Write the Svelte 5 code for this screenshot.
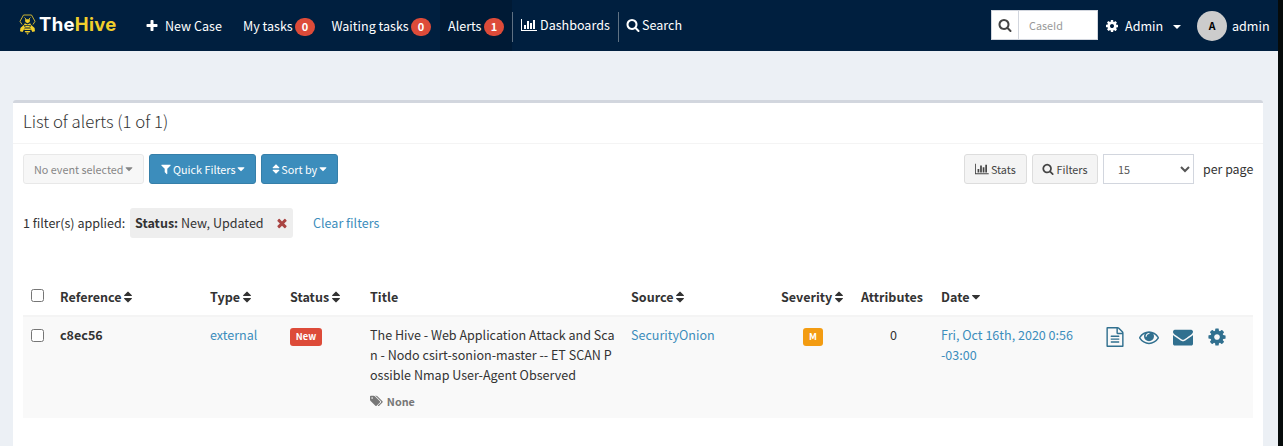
<script>
  const icons = {
    plus: [1792, 'M1600 736v192q0 40-28 68t-68 28h-416v416q0 40-28 68t-68 28h-192q-40 0-68-28t-28-68v-416h-416q-40 0-68-28t-28-68v-192q0-40 28-68t68-28h416v-416q0-40 28-68t68-28h192q40 0 68 28t28 68v416h416q40 0 68 28t28 68z'],
    search: [1792, 'M1216 832q0-185-131.5-316.5t-316.5-131.5-316.5 131.5-131.5 316.5 131.5 316.5 316.5 131.5 316.5-131.5 131.5-316.5zm512 832q0 52-38 90t-90 38q-54 0-90-38l-343-342q-179 124-399 124-143 0-273.5-55.5t-225-150-150-225-55.5-273.5 55.5-273.5 150-225 225-150 273.5-55.5 273.5 55.5 225 150 150 225 55.5 273.5q0 220-124 399l343 343q37 37 37 90z'],
    cog: [1792, 'M1152 896q0-106-75-181t-181-75-181 75-75 181 75 181 181 75 181-75 75-181zm512-109v222q0 12-8 23t-20 13l-185 28q-19 54-39 91 35 50 107 138 10 12 10 25t-9 23q-27 37-99 108t-94 71q-12 0-26-9l-138-108q-44 23-91 38-16 136-29 186-7 28-36 28h-222q-14 0-24.5-8.5t-11.5-21.5l-28-184q-49-16-90-37l-141 107q-10 9-25 9-14 0-25-11-126-114-165-168-7-10-7-23 0-12 8-23 15-21 51-66.5t54-70.5q-27-50-41-99l-183-27q-13-2-21-12.5t-8-23.5v-222q0-12 8-23t19-13l186-28q14-46 39-92-40-57-107-138-10-12-10-24 0-10 9-23 26-36 98.5-107.5t94.5-71.5q13 0 26 10l138 107q44-23 91-38 16-136 29-186 7-28 36-28h222q14 0 24.5 8.5t11.5 21.5l28 184q49 16 90 37l142-107q9-9 24-9 13 0 25 10 129 119 165 170 7 8 7 22 0 12-8 23-15 21-51 66.5t-54 70.5q26 50 41 98l183 28q13 2 21 12.5t8 23.5z'],
    chart: [2048, 'M640 896v512h-256v-512h256zm384-512v1024h-256v-1024h256zm1024 1152v128h-2048v-1536h128v1408h1920zm-640-896v768h-256v-768h256zm384-384v1152h-256v-1152h256z'],
    filter: [1792, 'M1595 295q17 41-14 70l-493 493v742q0 42-39 59-13 5-25 5-27 0-45-19l-256-256q-19-19-19-45v-486l-493-493q-31-29-14-70 17-39 59-39h1280q42 0 59 39z'],
    sort: [1792, 'M1408 1088q0 26-19 45l-448 448q-19 19-45 19t-45-19l-448-448q-19-19-19-45t19-45 45-19h896q26 0 45 19t19 45zm0-384q0 26-19 45t-45 19h-896q-26 0-45-19t-19-45 19-45l448-448q19-19 45-19t45 19l448 448q19 19 19 45z'],
    caret: [1792, 'M1408 704q0 26-19 45l-448 448q-19 19-45 19t-45-19l-448-448q-19-19-19-45t19-45 45-19h896q26 0 45 19t19 45z'],
    times: [1792, 'M1490 1322q0 40-28 68l-136 136q-28 28-68 28t-68-28l-294-294-294 294q-28 28-68 28t-68-28l-136-136q-28-28-28-68t28-68l294-294-294-294q-28-28-28-68t28-68l136-136q28-28 68-28t68 28l294 294 294-294q28-28 68-28t68 28l136 136q28 28 28 68t-28 68l-294 294 294 294q28 28 28 68z'],
    file: [1792, 'M1596 380q28 28 48 76t20 88v1152q0 40-28 68t-68 28h-1344q-40 0-68-28t-28-68v-1600q0-40 28-68t68-28h896q40 0 88 20t76 48zm-444-244v376h376q-10-29-22-41l-313-313q-12-12-41-22zm384 1528v-1024h-416q-40 0-68-28t-28-68v-416h-768v1536h1280zm-1024-864q0-14 9-23t23-9h704q14 0 23 9t9 23v64q0 14-9 23t-23 9h-704q-14 0-23-9t-9-23v-64zm736 224q14 0 23 9t9 23v64q0 14-9 23t-23 9h-704q-14 0-23-9t-9-23v-64q0-14 9-23t23-9h704zm0 256q14 0 23 9t9 23v64q0 14-9 23t-23 9h-704q-14 0-23-9t-9-23v-64q0-14 9-23t23-9h704z'],
    eye: [1792, 'M1664 960q-152-236-381-353 61 104 61 225 0 185-131.5 316.5t-316.5 131.5-316.5-131.5-131.5-316.5q0-121 61-225-229 117-381 353 133 205 333.5 326.5t434.5 121.5 434.5-121.5 333.5-326.5zm-720-384q0-20-14-34t-34-14q-125 0-214.5 89.5t-89.5 214.5q0 20 14 34t34 14 34-14 14-34q0-86 61-147t147-61q20 0 34-14t14-34zm848 384q0 34-20 69-140 230-376.5 368.5t-499.5 138.5-499.5-139-376.5-368q-20-35-20-69t20-69q140-229 376.5-368t499.5-139 499.5 139 376.5 368q20 35 20 69z'],
    envelope: [1792, 'M1792 710v794q0 66-47 113t-113 47h-1472q-66 0-113-47t-47-113v-794q44 49 101 87 362 246 497 345 57 42 92.5 65.5t94.5 48 110 24.5h2q51 0 110-24.5t94.5-48 92.5-65.5q170-123 498-345 57-39 100-87zm0-294q0 79-49 151t-122 123q-376 261-468 325-10 7-42.5 31t-54 38.5-52 32.5-57.5 27-50 9h-2q-23 0-50-9t-57.5-27-52-32.5-54-38.5-42.5-31q-91-64-262-182.5t-205-142.5q-62-42-117-115.5t-55-136.5q0-78 41.5-130t118.5-52h1472q65 0 112.5 47t47.5 113z'],
    tags: [1920, 'M448 448q0-53-37.5-90.5t-90.5-37.5-90.5 37.5-37.5 90.5 37.5 90.5 90.5 37.5 90.5-37.5 37.5-90.5zm1067 576q0 53-37 90l-491 492q-39 37-91 37-53 0-90-37l-715-716q-38-37-64.5-101t-26.5-117v-416q0-52 38-90t90-38h416q53 0 117 26.5t102 64.5l715 714q37 39 37 91zm384 0q0 53-37 90l-491 492q-39 37-91 37-36 0-59-14t-53-45l470-470q37-37 37-90 0-52-37-91l-715-714q-38-38-102-64.5t-117-26.5h224q53 0 117 26.5t102 64.5l715 714q37 39 37 91z']
  };
  const columns = [
    ['Reference', 'sort'], ['Type', 'sort'], ['Status', 'sort'], ['Title', ''],
    ['Source', 'sort'], ['Severity', 'sort'], ['Attributes', ''], ['Date', 'caret']
  ];
</script>

{#snippet icon(name, size)}
  <svg class="icon {name}" width={size * icons[name][0] / 1792} height={size} viewBox="0 0 {icons[name][0]} 1792"><path d={icons[name][1]} fill="currentColor" /></svg>
{/snippet}

<div class="page">
  <header>
    <a class="brand" href="#home" aria-label="TheHive">
      <svg width="17" height="21" viewBox="0 0 17 21" fill="none" stroke="#c9b233" stroke-width="1">
        <path d="M3 10.5 1 7.3 4.5 1h8L16 7.3l-2 3.2" />
        <path d="M5.5 3.5 7 5M11.5 3.5 10 5" />
        <g fill="#f1cf2c" stroke="none">
          <path d="M6 5.2h5L10.7 8 8.5 9.2 6.3 8z" />
          <path d="M5.8 9.2 8.5 10.6l2.7-1.4 1 2H4.8z" />
          <path d="M4.7 11 6 13.5 3.6 18 1 17.3 1.4 14zM12.3 11 11 13.5l2.4 4.5 2.6-.7-.4-3.3z" />
          <path d="M6.5 12h4l.6 1.5H5.9zM5.5 14.5h6l.4 1.5H5.1zM5.6 17h5.8l-1 1.5H6.6zM7.3 19.2h2.4l-1.2 1.6z" />
        </g>
      </svg>
      <span class="word">The<b>Hive</b></span>
    </a>
    <nav>
      <a class="new" href="#new">{@render icon('plus', 14)}<span>New Case</span></a>
      <a class="mine" href="#mine">My tasks<i class="count">0</i></a>
      <a class="waiting" href="#waiting">Waiting tasks<i class="count">0</i></a>
      <a class="alerts" href="#alerts">Alerts<i class="count">1</i></a>
      <a class="dash" href="#dash">{@render icon('chart', 14)}<span>Dashboards</span></a>
      <a class="find" href="#find">{@render icon('search', 14)}<span>Search</span></a>
    </nav>
    <div class="right">
      <div class="case"><span class="glass">{@render icon('search', 14)}</span><input placeholder="CaseId" /></div>
      <a class="admin" href="#admin">{@render icon('cog', 14)}<span>Admin</span><i class="tri"></i></a>
      <a class="user" href="#user"><span class="avatar">A</span><span>admin</span></a>
    </div>
  </header>

  <main>
    <h3>List of alerts (1 of 1)</h3>
    <div class="tools">
      <button class="btn none">No event selected {@render icon('caret', 12)}</button>
      <button class="btn blue quick">{@render icon('filter', 12)}Quick Filters {@render icon('caret', 12)}</button>
      <button class="btn blue sortby">{@render icon('sort', 12)}Sort by {@render icon('caret', 12)}</button>
      <div class="grow"></div>
      <button class="btn grey stats">{@render icon('chart', 12)}Stats</button>
      <button class="btn grey filt">{@render icon('search', 12)}Filters</button>
      <select><option>15</option></select>
      <span class="per">per page</span>
    </div>
    <div class="applied">
      <span class="label">1 filter(s) applied:</span>
      <span class="chip"><b>Status:</b>&nbsp;New, Updated<span class="x">{@render icon('times', 14)}</span></span>
      <a href="#clear">Clear filters</a>
    </div>
    <table>
      <colgroup>
        <col style="width:27px" /><col style="width:150px" /><col style="width:80px" /><col style="width:80px" /><col style="width:261px" /><col style="width:150px" /><col style="width:80px" /><col style="width:80px" /><col style="width:162px" /><col />
      </colgroup>
      <thead>
        <tr>
          <th class="check"><input type="checkbox" /></th>
          {#each columns as [name, mark]}
            <th><span class="head">{name}{#if mark}{@render icon(mark, 14)}{/if}</span></th>
          {/each}
          <th></th>
        </tr>
      </thead>
      <tbody>
        <tr>
          <td class="check"><input type="checkbox" /></td>
          <td><b>c8ec56</b></td>
          <td><a href="#type">external</a></td>
          <td><span class="tag red">New</span></td>
          <td>
            <div>The Hive - Web Application Attack and Sca<br />n - Nodo csirt-sonion-master -- ET SCAN P<br />ossible Nmap User-Agent Observed</div>
            <div class="taglist">{@render icon('tags', 12)}<b>None</b></div>
          </td>
          <td><a href="#source">SecurityOnion</a></td>
          <td class="mid"><span class="tag orange">M</span></td>
          <td class="mid zero">0</td>
          <td><a href="#date">Fri, Oct 16th, 2020 0:56<br />-03:00</a></td>
          <td class="actions">
            <div>
              {@render icon('file', 20)}{@render icon('eye', 20)}{@render icon('envelope', 20)}{@render icon('cog', 20)}
            </div>
          </td>
        </tr>
      </tbody>
    </table>
  </main>
</div>

<style>
  :global(body) { background: #060b0b; }
  * { box-sizing: border-box; }
  .page {
    width: 1278px; height: 446px; overflow: hidden; background: #ecf0f5; color: #333;
    font: 12.55px/20px "Noto Sans CJK JP", "Noto Sans", sans-serif;
  }
  .icon { display: block; flex: none; }
  a { color: #3c8dbc; text-decoration: none; }
  header { display: flex; height: 51px; background: #001f3f; }
  header a { color: #fff; display: flex; align-items: center; height: 51px; }
  .brand { width: 146px; padding-left: 19px; }
  .brand svg { margin-top: -3px; }
  .word { font: 700 18.5px/20px Inter, sans-serif; margin: -3px 0 0 3px; letter-spacing: 0.3px; }
  .word b { color: #f1cf2c; font-weight: 700; }
  nav { display: flex; }
  nav span { white-space: nowrap; }
  .new { width: 98px; margin-left: -1px; gap: 6px; }
  .mine { width: 88.5px; }
  .waiting { width: 108.5px; }
  .alerts { width: 72px; padding-left: 8px; background: #001a35; }
  .count {
    margin: 3px 0 0 2.4px; min-width: 20px; height: 18px; border-radius: 9px; background: #dd4b39;
    font: 700 11px/17px "Noto Sans CJK JP", sans-serif; text-align: center;
  }
  nav .dash, nav .find { border-left: 1px solid #5f7183; height: 30px; margin-top: 12px; padding: 0 0 4px 8px; gap: 3px; }
  nav .find { gap: 2px; padding-left: 7px; }
  .dash { width: 106px; }
  .right { display: flex; margin-left: auto; }
  .case { display: flex; width: 107px; height: 30px; margin: 10px 8px 0 0; border: 1px solid #d2d6de; background: #fff; color: #444; }
  .glass { width: 27px; border-right: 1px solid #d2d6de; display: grid; place-items: center; }
  .case input { border: 0; width: 76px; padding: 0 0 0 10px; font: 10.8px "Noto Sans CJK JP", sans-serif; background: none; outline: 0; }
  .case input::placeholder { color: #999; }
  .admin { width: 91px; }
  .admin .icon { margin-left: -1px; }
  .admin span { margin-left: 6px; }
  .tri { margin: 3px 0 0 10px; border: 4px solid transparent; border-top-color: #fff; border-bottom: 0; }
  .user { width: 81px; gap: 5px; }
  .avatar { width: 30px; height: 30px; border-radius: 50%; background: #ccc; color: #000; font-weight: 700; font-size: 10.5px; line-height: 30px; text-align: center; }

  main { margin: 49px 15px 0 13px; height: 360px; background: #fff; border-top: 3px solid #d2d6de; border-radius: 3px; }
  h3 { margin: 0; height: 41px; padding: 8px 10px 0; border-bottom: 1px solid #f4f4f4; font-size: 16.8px; line-height: 20px; font-weight: 300; color: #333; }
  .tools { display: flex; padding: 10px 10px 0; }
  .btn {
    display: flex; align-items: center; justify-content: center; white-space: pre; height: 30px; margin-right: 5px; padding: 0 0 1px;
    border: 1px solid #ddd; border-radius: 3px; background: #f4f4f4; color: #444;
    font: 10.8px/18px "Noto Sans CJK JP", sans-serif;
  }
  .btn .caret { margin: 0 -2px 0 -3px; }
  .none { width: 121px; opacity: .65; }
  .blue { background: #3c8dbc; border-color: #367fa9; color: #fff; }
  .quick { width: 107px; }
  .quick .filter { margin-right: 1px; }
  .sortby { width: 77px; }
  .btn .sort { margin: 0 -1px 0 -2px; }
  .stats { width: 63px; gap: 2px; }
  .filt { width: 66px; gap: 2px; }
  .grow { flex: 1; }
  select { width: 91px; height: 30px; border: 1px solid #d2d6de; border-radius: 0; background: #fff; color: #555; padding: 0 0 0 10px; font: 10.8px "Noto Sans CJK JP", sans-serif; }
  .per { margin-left: 9px; line-height: 30px; white-space: nowrap; width: 50px; font-size: 12.4px; }
  .applied { display: flex; align-items: center; height: 30px; margin: 24px 10px 0; }
  .label { width: 107px; white-space: nowrap; }
  .chip { display: flex; align-items: center; width: 163px; height: 30px; padding-left: 5px; background: #eee; border-radius: 3px; margin-right: 20px; white-space: nowrap; }
  .x { color: #a94442; margin: 0 4px 0 auto; }
  table { width: 1230px; margin: 38px 10px 0; border-collapse: separate; border-spacing: 0; table-layout: fixed; }
  th { height: 41px; padding: 11px 0 8px 10px; border-bottom: 2px solid #f4f4f4; text-align: left; vertical-align: top; }
  .head { display: flex; align-items: center; }
  .head .sort { margin-left: -0.5px; }
  td { height: 101px; padding: 8px 0 0 10px; background: #f9f9f9; vertical-align: top; white-space: nowrap; }
  .check { padding-left: 8px; }
  .check input { display: block; width: 13px; height: 13px; margin: 2px 0 0; }
  td.check input { margin-top: 4px; }
  .tag { display: block; width: 32px; height: 18px; margin-top: 3px; border-radius: 3px; color: #fff; font-weight: 700; font-size: 9.3px; line-height: 17px; text-align: center; }
  .red { background: #dd4b39; }
  .orange { background: #f39c12; width: 20px; margin-left: 22px; }
  .zero { padding: 8px 0 0 39px; }
  .taglist { display: flex; align-items: center; gap: 4px; margin-top: 6px; height: 20px; color: #777; font-size: 10.8px; }
  .actions div { display: flex; gap: 14px; margin-top: 2px; padding-left: 2px; color: #31708f; }
</style>
